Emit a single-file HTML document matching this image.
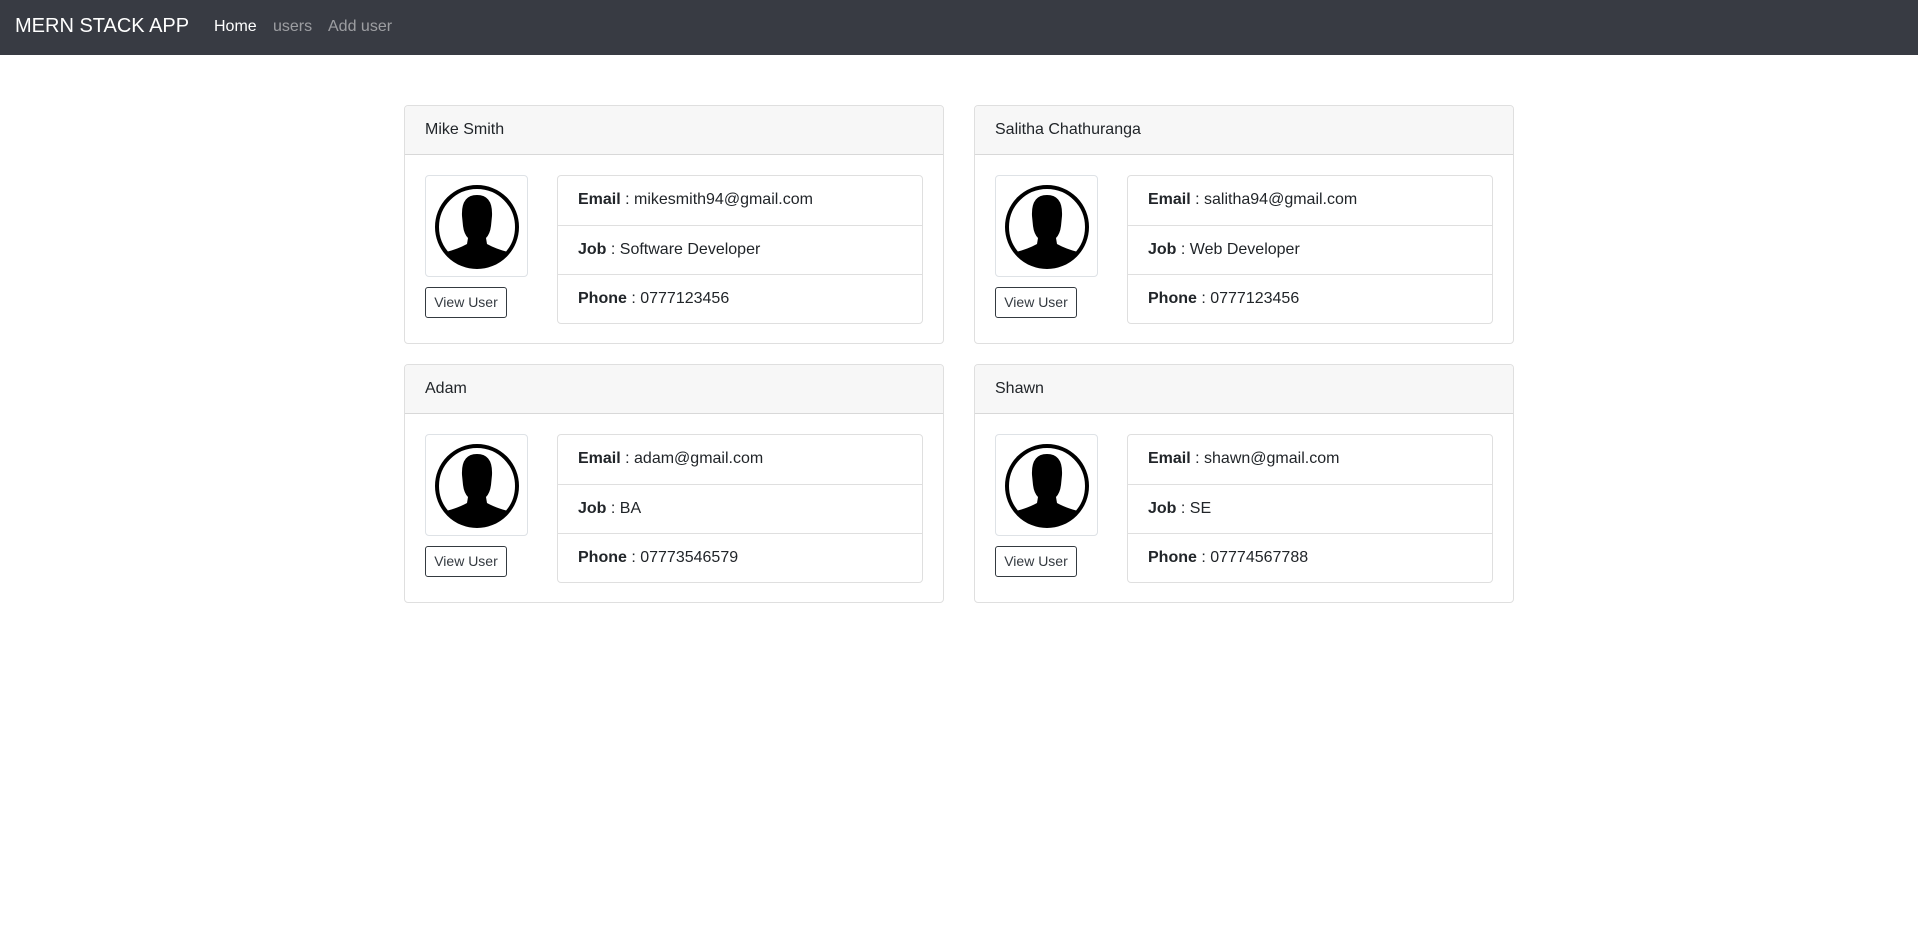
<!DOCTYPE html>
<html><head><meta charset="utf-8"><style>
*{box-sizing:border-box;margin:0;padding:0}
body{width:1918px;height:952px;background:#fff;font-family:"Liberation Sans",Arial,sans-serif;color:#212529;position:relative;overflow:hidden}
.nav{position:absolute;left:0;top:0;width:1918px;height:55px;background:#383b43}
.brand{position:absolute;left:15px;top:15px;font-size:20px;color:#fff}
.nl{position:absolute;top:18px;font-size:16px;color:rgba(255,255,255,.5)}
.card{position:absolute;width:540px;height:239px;border:1px solid rgba(0,0,0,.125);border-radius:4px;overflow:hidden}
.hd{height:49px;background:#f7f7f7;border-bottom:1px solid rgba(0,0,0,.125);padding:0 20px;line-height:48px;font-size:16px}
.th{position:absolute;left:20px;top:69px;width:103px;height:102px;border:1px solid #dee2e6;border-radius:4px}
.btn{position:absolute;left:20px;top:181px;width:82px;height:31px;border:1px solid #343a40;border-radius:3px;font-size:14px;line-height:29px;text-align:center;color:#343a40}
.lg{position:absolute;left:152px;top:69px;width:366px;border:1px solid rgba(0,0,0,.125);border-radius:4px}
.li{height:49px;line-height:47px;padding:0 20px;font-size:16px;border-top:1px solid rgba(0,0,0,.125)}
.li:first-child{border-top:none}
b{font-weight:bold}
</style></head><body>
<div class="nav"><span class="brand">MERN STACK APP</span><span class="nl" style="left:214px;color:#fff">Home</span><span class="nl" style="left:273px">users</span><span class="nl" style="left:328px">Add user</span></div>

<svg width="0" height="0" style="position:absolute"><defs>
<g id="av"><clipPath id="cp"><circle cx="51" cy="51" r="40"/></clipPath>
<g clip-path="url(#cp)"><path d="M36 40 Q35 19 51 19 Q67 19 66 40 L65 50 Q64 58 60 62 L61 68 Q70 73 82 76 Q94 80 96 100 L6 100 Q8 80 20 76 Q32 73 41 68 L42 62 Q38 58 37 50 Z" fill="#000"/></g>
<circle cx="51" cy="51" r="40" fill="none" stroke="#000" stroke-width="4"/></g></defs></svg>

<div class="card" style="left:404px;top:105px"><div class="hd">Mike Smith</div>
<div class="th"><svg width="101" height="100"><use href="#av"/></svg></div><div class="btn">View User</div>
<div class="lg"><div class="li"><b>Email</b> : mikesmith94@gmail.com</div><div class="li"><b>Job</b> : Software Developer</div><div class="li"><b>Phone</b> : 0777123456</div></div></div>

<div class="card" style="left:974px;top:105px"><div class="hd">Salitha Chathuranga</div>
<div class="th"><svg width="101" height="100"><use href="#av"/></svg></div><div class="btn">View User</div>
<div class="lg"><div class="li"><b>Email</b> : salitha94@gmail.com</div><div class="li"><b>Job</b> : Web Developer</div><div class="li"><b>Phone</b> : 0777123456</div></div></div>

<div class="card" style="left:404px;top:364px"><div class="hd">Adam</div>
<div class="th"><svg width="101" height="100"><use href="#av"/></svg></div><div class="btn">View User</div>
<div class="lg"><div class="li"><b>Email</b> : adam@gmail.com</div><div class="li"><b>Job</b> : BA</div><div class="li"><b>Phone</b> : 07773546579</div></div></div>

<div class="card" style="left:974px;top:364px"><div class="hd">Shawn</div>
<div class="th"><svg width="101" height="100"><use href="#av"/></svg></div><div class="btn">View User</div>
<div class="lg"><div class="li"><b>Email</b> : shawn@gmail.com</div><div class="li"><b>Job</b> : SE</div><div class="li"><b>Phone</b> : 07774567788</div></div></div>
</body></html>
